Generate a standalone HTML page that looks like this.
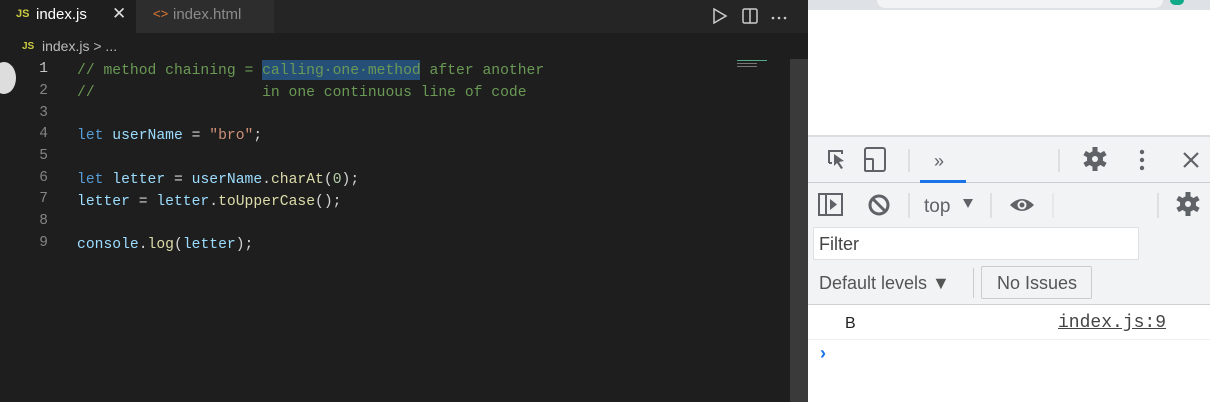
<!DOCTYPE html><html><head><style>
*{margin:0;padding:0;box-sizing:border-box}
body{width:1210px;height:402px;overflow:hidden;position:relative;background:#1e1e1e;font-family:"Liberation Sans",sans-serif}
.abs{position:absolute}
.code{font-family:"Liberation Mono",monospace;font-size:14.7px;white-space:pre;color:#d4d4d4}
.ln{position:absolute;left:0;width:48px;text-align:right;font-family:"Liberation Mono",monospace;font-size:14.5px;color:#858585}
.c{color:#6a9955}.k{color:#569cd6}.v{color:#9cdcfe}.s{color:#ce9178}.f{color:#dcdcaa}.n{color:#b5cea8}.t{color:#4ec9b0}
.ic{fill:#5f6368}
</style></head><body>
<div class="abs" style="left:0;top:0;width:808px;height:33px;background:#252526"></div>
<div class="abs" style="left:0;top:0;width:136px;height:33px;background:#1e1e1e"></div>
<div class="abs" style="left:136px;top:0;width:138px;height:33px;background:#2d2d2d"></div>
<div class="abs" style="left:16px;top:8px;font-size:11px;font-weight:bold;color:#cbcb41">JS</div>
<div class="abs" style="left:36px;top:6px;font-size:15px;color:#fff">index.js</div>
<div class="abs" style="left:112px;top:4px;font-size:17px;color:#ddd">✕</div>
<div class="abs" style="left:153px;top:6px;font-size:13px;color:#e37933">&lt;&gt;</div>
<div class="abs" style="left:173px;top:6px;font-size:15px;color:#8b8b8b">index.html</div>
<svg class="abs" style="left:710px;top:5px" width="80" height="22"><path d="M4 4 L16 11 L4 18 Z" fill="none" stroke="#ccc" stroke-width="1.5"/><rect x="33" y="4" width="14" height="14" rx="1.5" fill="none" stroke="#ccc" stroke-width="1.5"/><line x1="40" y1="4" x2="40" y2="18" stroke="#ccc" stroke-width="1.5"/><circle cx="63" cy="13" r="1.3" fill="#ccc"/><circle cx="69" cy="13" r="1.3" fill="#ccc"/><circle cx="75" cy="13" r="1.3" fill="#ccc"/></svg>
<div class="abs" style="left:22px;top:41px;font-size:10px;font-weight:bold;color:#cbcb41">JS</div>
<div class="abs" style="left:42px;top:38px;font-size:14px;color:#bbb">index.js &gt; ...</div>
<div class="abs" style="left:-8px;top:62px;width:24px;height:32px;border-radius:50%;background:#ddd"></div>
<div class="ln" style="top:61px;color:#c6c6c6">1</div>
<div class="ln" style="top:83px">2</div>
<div class="ln" style="top:105px">3</div>
<div class="ln" style="top:126px">4</div>
<div class="ln" style="top:148px">5</div>
<div class="ln" style="top:170px">6</div>
<div class="ln" style="top:191px">7</div>
<div class="ln" style="top:213px">8</div>
<div class="ln" style="top:235px">9</div>
<div class="abs" style="left:262px;top:60px;width:158px;height:20px;background:#264f78"></div>
<div class="abs code" style="left:77px;top:61px;line-height:21.75px"><span class="c">// method chaining = calling·one·method after another</span>
<span class="c">//                   in one continuous line of code</span>

<span class="k">let</span> <span class="v">userName</span> = <span class="s">"bro"</span>;

<span class="k">let</span> <span class="v">letter</span> = <span class="v">userName</span>.<span class="f">charAt</span>(<span class="n">0</span>);
<span class="v">letter</span> = <span class="v">letter</span>.<span class="f">toUpperCase</span>();

<span class="v">console</span>.<span class="f">log</span>(<span class="v">letter</span>);</div>
<div class="abs" style="left:737px;top:60px;width:30px;height:1px;background:#5a8"></div>
<div class="abs" style="left:737px;top:63px;width:20px;height:1px;background:#777"></div>
<div class="abs" style="left:737px;top:66px;width:20px;height:1px;background:#777"></div>
<div class="abs" style="left:790px;top:59px;width:18px;height:343px;background:#3a3a3a"></div>
<div class="abs" style="left:808px;top:0;width:402px;height:402px;background:#fff"></div>
<div class="abs" style="left:808px;top:0;width:402px;height:10px;background:#dee1e6"></div>
<div class="abs" style="left:877px;top:0;width:286px;height:8px;background:#f1f3f4;border-radius:0 0 8px 8px"></div>
<div class="abs" style="left:1170px;top:0;width:14px;height:5px;background:#1a8;border-radius:0 0 7px 7px"></div>
<div class="abs" style="left:808px;top:135px;width:402px;height:2px;background:#dadce0"></div>
<div class="abs" style="left:808px;top:137px;width:402px;height:46px;background:#f1f3f4;border-bottom:1px solid #cbcdd1"></div>
<div class="abs" style="left:808px;top:183px;width:402px;height:122px;background:#f1f3f4;border-bottom:1px solid #d0d0d0"></div>
<div class="abs" style="left:920px;top:180px;width:46px;height:3px;background:#1a73e8"></div>
<svg class="abs" style="left:808px;top:137px" width="402" height="90">
<path d="M21 26 V14 H34 V17 M21 26 H24" fill="none" stroke="#5f6368" stroke-width="2"/><path d="M26 17 L36 24 L31 25 L35 31 L33 32 L29 26 L26 29 Z" class="ic"/>
<rect x="57" y="11" width="20" height="23" rx="2" fill="none" stroke="#5f6368" stroke-width="2"/><rect x="57" y="22" width="8" height="12" rx="1" fill="#f1f3f4" stroke="#5f6368" stroke-width="2"/>
<line x1="101" y1="12" x2="101" y2="35" stroke="#ccc"/>
<text x="126" y="30" font-size="18" fill="#5f6368" font-family="Liberation Sans">»</text>
<line x1="251" y1="12" x2="251" y2="35" stroke="#ccc"/>
<g transform="translate(287 22)"><circle r="8" class="ic"/><g class="ic"><rect x="-2.5" y="-12" width="5" height="24"/><rect x="-2.5" y="-12" width="5" height="24" transform="rotate(60)"/><rect x="-2.5" y="-12" width="5" height="24" transform="rotate(120)"/></g><circle r="3" fill="#f1f3f4"/></g>
<circle cx="334" cy="15" r="2.2" class="ic"/><circle cx="334" cy="23" r="2.2" class="ic"/><circle cx="334" cy="31" r="2.2" class="ic"/>
<path d="M376 16 L390 30 M390 16 L376 30" stroke="#5f6368" stroke-width="2.2"/>
<g transform="translate(0 46)">
<rect x="11" y="11" width="23" height="21" fill="none" stroke="#5f6368" stroke-width="2"/><line x1="18" y1="11" x2="18" y2="32" stroke="#5f6368" stroke-width="2"/><path d="M22 16 L29 21.5 L22 27 Z" class="ic"/>
<circle cx="71" cy="22" r="9" fill="none" stroke="#5f6368" stroke-width="3"/><line x1="65" y1="16" x2="77" y2="28" stroke="#5f6368" stroke-width="3"/>
<line x1="101" y1="10" x2="101" y2="35" stroke="#ccc"/>
<text x="116" y="29" font-size="19" fill="#5f6368" font-family="Liberation Sans">top</text><path d="M155 16 L165 16 L160 25 Z" class="ic"/>
<line x1="183" y1="10" x2="183" y2="35" stroke="#ccc"/>
<path d="M202 22 Q214 10 226 22 Q214 34 202 22 Z" class="ic"/><circle cx="214" cy="22" r="4.5" fill="#f1f3f4"/><circle cx="214" cy="22" r="2.5" class="ic"/>
<line x1="245" y1="10" x2="245" y2="35" stroke="#ddd"/>
<line x1="350" y1="10" x2="350" y2="35" stroke="#ccc"/>
<g transform="translate(380 21)"><circle r="8" class="ic"/><g class="ic"><rect x="-2.5" y="-12" width="5" height="24"/><rect x="-2.5" y="-12" width="5" height="24" transform="rotate(60)"/><rect x="-2.5" y="-12" width="5" height="24" transform="rotate(120)"/></g><circle r="3" fill="#f1f3f4"/></g>
</g></svg>
<div class="abs" style="left:813px;top:227px;width:326px;height:33px;background:#fff;border:1px solid #e0e0e0"></div>
<div class="abs" style="left:819px;top:234px;font-size:18px;color:#444">Filter</div>
<div class="abs" style="left:819px;top:273px;font-size:18px;color:#555">Default levels ▼</div>
<div class="abs" style="left:973px;top:268px;width:1px;height:30px;background:#ccc"></div>
<div class="abs" style="left:981px;top:266px;width:111px;height:33px;border:1px solid #ccc;border-radius:2px;background:#f1f3f4"></div>
<div class="abs" style="left:997px;top:273px;font-size:18px;color:#555">No Issues</div>
<div class="abs" style="left:845px;top:315px;font-size:16px;color:#222">B</div>
<div class="abs" style="left:1058px;top:313px;font-family:'Liberation Mono',monospace;font-size:18px;color:#444;text-decoration:underline">index.js:9</div>
<div class="abs" style="left:808px;top:339px;width:402px;height:1px;background:#eee"></div>
<div class="abs" style="left:820px;top:343px;font-size:18px;font-weight:bold;color:#1a73e8">›</div>
</body></html>
